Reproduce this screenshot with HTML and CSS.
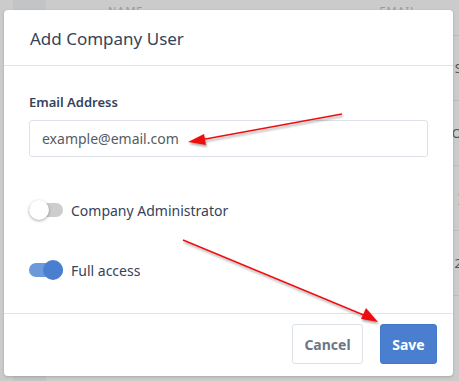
FILE: index.html
```html
<!DOCTYPE html>
<html>
<head>
<meta charset="utf-8">
<link rel="stylesheet" href="styles.css">
</head>
<body>
<div class="page">
  <div class="side"></div>
  <div class="table">
    <div class="thead"><span class="th name">NAME</span><span class="th email">EMAIL</span></div>
    <div class="row"><span class="cell">S</span></div>
    <div class="row"><span class="cell">O</span></div>
    <div class="row"><span class="cell">)</span></div>
    <div class="row"><span class="cell">2</span></div>
  </div>
</div>

<div class="modal">
  <div class="modal-header">Add Company User</div>
  <div class="modal-body">
    <label class="label">Email Address</label>
    <div class="input">example@email.com</div>
    <div class="switch-row first">
      <span class="switch off"><span class="knob"></span></span>
      <span class="switch-label">Company Administrator</span>
    </div>
    <div class="switch-row">
      <span class="switch on"><span class="knob"></span></span>
      <span class="switch-label">Full access</span>
    </div>
  </div>
  <div class="modal-footer">
    <button class="btn cancel">Cancel</button>
    <button class="btn save">Save</button>
  </div>
</div>

<svg class="arrows" width="459" height="381" viewBox="0 0 459 381">
  <defs>
    <filter id="sh" x="-10%" y="-10%" width="120%" height="120%">
      <feDropShadow dx="1" dy="2" stdDeviation="1" flood-color="#000" flood-opacity="0.35"/>
    </filter>
  </defs>
  <g filter="url(#sh)" fill="#ee1111" stroke="#ee1111">
    <line x1="342" y1="114" x2="200" y2="140" stroke-width="1.4"/>
    <polygon points="188,142 204,134 206,145" stroke="none"/>
    <line x1="183" y1="240" x2="366" y2="316" stroke-width="1.4"/>
    <polygon points="378,322 361,319 366,308" stroke="none"/>
  </g>
</svg>
</body>
</html>
```
FILE: styles.css
```css
html, body {
  margin: 0;
  padding: 0;
}
body {
  width: 459px;
  height: 381px;
  overflow: hidden;
  background: #cbcbcb;
  font-family: "Segoe UI", "Noto Sans", "Open Sans", sans-serif;
  position: relative;
}
.page {
  display: flex;
  height: 381px;
}
.side {
  width: 33px;
  margin-left: 13px;
  background: #c3c4c6;
}
.table {
  flex: 1;
  display: flex;
  flex-direction: column;
}
.thead {
  height: 35px;
  display: flex;
  align-items: flex-start;
  color: #9a9a9a;
  font-size: 11px;
  letter-spacing: 1px;
  border-bottom: 1px solid #bdbdbd;
}
.th { padding-top: 3px; }
.th.name { margin-left: 62px; }
.th.email { margin-left: 236px; }
.row {
  height: 64px;
  border-bottom: 1px solid #bdbdbd;
  display: flex;
  justify-content: flex-end;
  align-items: center;
  font-size: 13px;
  color: #555;
}
.cell { margin-right: -3px; }

.modal {
  position: absolute;
  left: 4px;
  top: 10px;
  width: 449px;
  height: 366px;
  background: #fff;
  border-radius: 4px;
  box-shadow: 0 1px 3px rgba(0,0,0,0.18);
  display: flex;
  flex-direction: column;
}
.modal-header {
  height: 56px;
  box-sizing: border-box;
  padding: 17px 26px 0;
  font-size: 17px;
  color: #34445a;
  border-bottom: 1px solid #dfe5ec;
}
.modal-body {
  flex: 1;
  padding: 27px 25px 0;
  border-bottom: 1px solid #dfe5ec;
}
.label {
  display: block;
  font-size: 13px;
  font-weight: 600;
  color: #34435a;
  margin-bottom: 9px;
}
.input {
  height: 35px;
  border: 1px solid #dde2e8;
  border-radius: 3px;
  box-sizing: content-box;
  display: flex;
  align-items: center;
  padding-left: 12px;
  font-size: 14px;
  color: #555b63;
}
.switch-row {
  display: flex;
  align-items: center;
  gap: 8px;
  height: 22px;
}
.switch-row.first { margin-top: 42px; margin-bottom: 38px; }
.switch {
  position: relative;
  width: 34px;
  height: 14px;
  border-radius: 7px;
  display: inline-block;
}
.switch.off { background: #cdcdcd; }
.switch.on { background: #6c98dc; }
.knob {
  position: absolute;
  top: -3px;
  width: 20px;
  height: 20px;
  border-radius: 50%;
}
.switch.off .knob {
  left: 0;
  background: #fff;
  box-shadow: 0 1px 3px rgba(0,0,0,0.35);
}
.switch.on .knob {
  right: 0;
  background: #4a7fd0;
}
.switch-label {
  font-size: 14px;
  color: #34435a;
}
.modal-footer {
  height: 62px;
  box-sizing: border-box;
  padding: 10px 16px 0;
  display: flex;
  justify-content: flex-end;
  align-items: flex-start;
  gap: 17px;
}
.btn {
  height: 40px;
  border-radius: 3px;
  font-family: inherit;
  font-size: 14px;
  font-weight: 700;
  padding: 0;
}
.cancel {
  width: 71px;
  background: #fff;
  border: 1px solid #dde2e8;
  color: #6d7682;
}
.save {
  width: 57px;
  background: #4a7fd0;
  border: 1px solid #4178cc;
  color: #fff;
}
.arrows {
  position: absolute;
  left: 0;
  top: 0;
  pointer-events: none;
}
```
